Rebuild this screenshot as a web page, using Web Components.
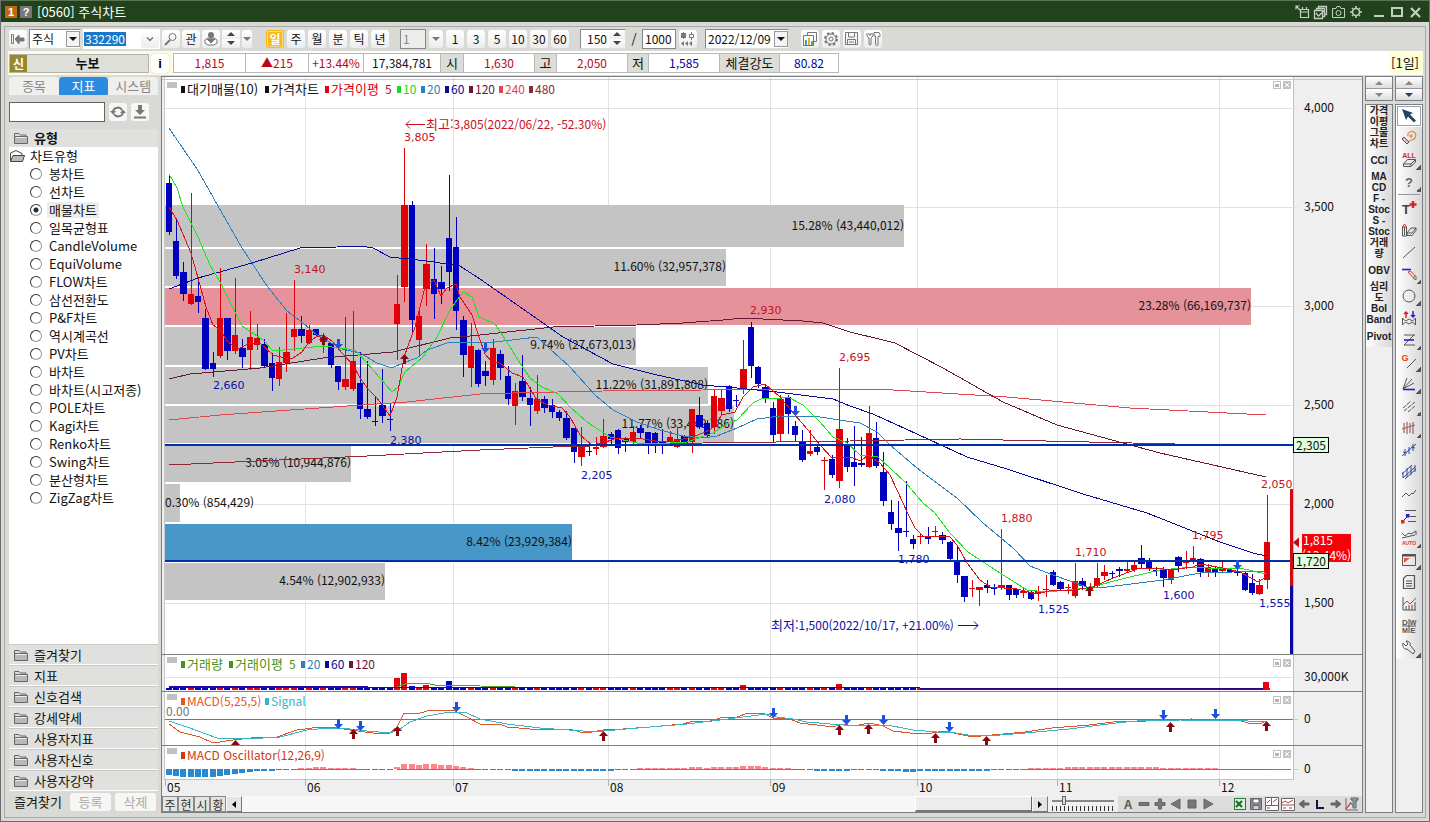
<!DOCTYPE html>
<html lang="ko">
<head>
<meta charset="utf-8">
<title>[0560] 주식차트</title>
<style>
    html, body { margin: 0; }
    body {
        font: 13px/16px "Noto Sans CJK KR", sans-serif;
        color: #111;
        background: #d9dad5;
    }
</style>
</head>
<body>
<app-window>
    <title-bar slot="title" code="0560">주식차트</title-bar>
    <chart-toolbar slot="bars"></chart-toolbar>
    <quote-bar slot="bars"></quote-bar>
    <side-panel></side-panel>
    <chart-view></chart-view>
    <tool-strip kind="text"></tool-strip>
    <tool-strip kind="icon"></tool-strip>
</app-window>

<script>
// lettering inside a glyph
const letters = (x, y, t, size, fill) =>
    `<text x="${x}" y="${y}" text-anchor="middle" font-family="Liberation Sans, sans-serif" font-weight="bold" font-size="${size}" fill="${fill}" stroke="none">${t}</text>`;

// 16x16 glyphs, drawn with currentColor unless a tool has its own colour
const GLYPHS = {
    popout: '<path d="M6.5 5.5h8v8h-8zM6 8h9M8.5 3v2M12.5 3v2M2 2l4 4M2 5.5V2h3.5" stroke-width="1.2"/>',
    sheets: '<path d="M2.5 6.5h8v8h-8zM4.5 6V4.5h8v8H11M6.5 4V2.5h8v8H13M4 9l2.5 3L13 6" stroke-width="1.3"/>',
    camera: '<path d="M2.5 4.5H6l1-2h3l1 2h3.5v9h-12z"/><circle cx="8.5" cy="9" r="2.5"/>',
    sun: '<circle cx="8" cy="8" r="3.5" stroke-width="1.6"/><path d="M8 2v2M8 12v2M2 8h2M12 8h2M4 4l1 1M11 11l1 1M12 4l-1 1M5 11l-1 1" stroke-width="1.6"/>',
    min: '<path d="M3 12h10" stroke-width="2"/>',
    max: '<path d="M3 4h10v8H3z" stroke-width="2"/>',
    close: '<path d="M4 4l9 9M13 4l-9 9" stroke-width="2.2"/>',
    first: '<path d="M1.5 3.5h2v9h-2z"/><path d="M5 8l4-4v3h5v3H9v3z" fill="currentColor"/>',
    search: '<circle cx="9.5" cy="6" r="3.5"/><path d="M7 9l-5 5" stroke-width="2"/>',
    chev: '<path d="M5 6.5l3 3 3-3" stroke-width="1.5"/>',
    down: '<path d="M4 6h8l-4 4z" fill="currentColor" stroke="none"/>',
    up: '<path d="M4 10h8L8 6z" fill="currentColor" stroke="none"/>',
    scrollLeft: '<path d="M10 5v7L6 8.5z" fill="#000" stroke="none"/>',
    scrollRight: '<path d="M6 5v7l4-3.5z" fill="#000" stroke="none"/>',
    stamp: '<circle cx="8" cy="4" r="3" fill="currentColor" stroke="none"/><path d="M2 9l3-2h6l3 2v3l-3 2H5l-3-2z" fill="#fff"/><path d="M4 8h8l-4 4z" fill="currentColor"/>',
    squeeze: '<g fill="currentColor" stroke="none"><rect x="1" y="2" width="5" height="5"/><path d="M3 1h1v7H3zM4 10v5l-3-2.5zM8 10v5l-3-2.5zM12 10v5l-3-2.5z"/></g><path d="M9.5 3.5h4v3h-4zM11.5 1v2M11.5 7v2"/>',
    charts: '<path d="M5.5 1.5h9v9h-9z" fill="#fff"/><path d="M1.5 4.5h10v10h-10z" fill="#fff"/><path d="M3 9h2v5H3z" fill="#3a9bd0" stroke="none"/><path d="M6 7h2v7H6z" fill="#e8b020" stroke="none"/><path d="M9 10h2v4H9z" fill="#5fae5f" stroke="none"/>',
    gear: '<circle cx="8" cy="8" r="6" stroke-dasharray="2.5 2.2" stroke-width="2"/><circle cx="8" cy="8" r="5" fill="#f4f4f4"/><circle cx="8" cy="8" r="2"/>',
    save: '<path d="M1.5 1.5h12v12h-12zM4.5 2v4h6V2M3.5 13.5v-5h8v5M5 11h5"/>',
    tools: '<path d="M2 2v3l2 2v6c0 1.5 2 1.5 2 0V7l2-2V2M4 2v2h2V2M9 1.5h5l1 2v2h-2v8c0 1.5-2.5 1.5-2.5 0V5H9z"/>',
    refresh: '<path d="M3 7a5 5 0 0 1 9-1M13 9a5 5 0 0 1-9 1" stroke-width="2"/><path d="M0 7h6l-3 3.5zM10 9h6l-3-3.5z" fill="currentColor" stroke="none"/>',
    import: '<path d="M6 1h4v5h3l-5 5-5-5h3z" fill="currentColor" stroke="none"/><path d="M2 13.5h12" stroke-width="2"/>',
    cursor: '<path d="M1 1l11 4-3 1.5 6 6-2 2-6-6-2 3.5z" fill="#1f4568" stroke="none"/>',
    undo: '<path d="M7 6c-1-3 3-6 6-4s2 7-2 8l-3 1M10 4v4M8 6h4" stroke="#e08848" stroke-width="1.2"/><path d="M1 9l2-2 5 5-2 2z" fill="#ccc"/><path d="M1 9l2-2" stroke="#d22"/>',
    eraseAll: '<path d="M2.5 12l4-4.5h8L10 12zM2.5 12v2.5H10V12M10 14.5l4.5-4.5V7.5"/>' + letters(8, 6, 'ALL', 7, '#d22'),
    help: letters(8, 13, '?', 13, '#666'),
    text: letters(5, 14, 'T', 13, '#444') + '<path d="M12 1v7M8.5 4.5h7" stroke="#e02020" stroke-width="2.4"/>',
    eraser: '<path d="M1.5 5h4v9h-4zM3.500 5v8"/><path d="M1.5 5l2-3 2 3" stroke="#c33"/><path d="M6 11l4-5h5l-4 5zM6 11v2.5h5l4-5V6"/>',
    line: '<path d="M2 14L14 3"/>',
    pencil: '<path d="M1 3.5h9" stroke="#22c" stroke-width="1.6"/><path d="M7 6l5 5.5 2.5-1.5-5-5z" fill="#f4d8d0" stroke="#b44"/><path d="M12 12l3 2v-4" stroke="#383"/>',
    circle: '<circle cx="8" cy="8" r="6"/>',
    swing: '<path d="M1.5 15V8l3 3 3.500-2 3.500 2 3-3v7M1.500 15l3-3 3.500 2 3.500-2 3 3"/><path d="M5 8V2M3 4l2-2 2 2" stroke="#d22" stroke-width="1.5"/><path d="M12 1v6M10 5l2 2 2-2" stroke="#22c" stroke-width="1.5"/>',
    zline: '<path d="M3 3h11M3 13h11M3 13L13 3"/><path d="M3 8h10" stroke="#22c" stroke-width="1.6"/>',
    gline: '<path d="M6 14L15 5"/>' + letters(4, 7, 'G', 9, '#d42'),
    fan: '<path d="M2 13L13 7M2 13L11 3M2 13L6 2"/><path d="M2 13.5h12" stroke="#22c" stroke-width="1.6"/>',
    rays: '<path d="M2 10l8-7M3 13L14 4M7 14l7-6" stroke-dasharray="4 1"/>',
    bars: '<path d="M3 3v10M6 2v12M9 3v10M12 2v12" stroke="#845"/><path d="M1 9l13-4" stroke="#b53"/>',
    zig: '<path d="M1 14L15 2M4 14V7M8 12V5M12 9V2M2 10l4 1M10 5l4 1" stroke="#334a9c"/>',
    zig2: '<path d="M1 10L11 1M4 15L15 5M2 14V8M6 13V4M10 11V2M14 8V1M2 14l12-11" stroke="#334a9c"/>',
    wave: '<path d="M1 11l4-4 3 3 3-3 1 1 3-4"/>',
    levels: '<path d="M4 2.5h11M9 8.5h6M7 13.5h8"/><path d="M2 13l5-5" stroke="#22c"/><path d="M0 12h3.5v3.5H0z" fill="#e22" stroke="none"/><path d="M5 6h3.5v3.5H5z" fill="#22c" stroke="none"/>',
    auto: '<path d="M1 3l3 3 4-3 2 1 5-3v4M1 8l13-3"/>' + letters(8, 15, 'AUTO', 5, '#d33'),
    window: '<path d="M1.5 2.5h13v11h-13z"/><path d="M1 3.5h14" stroke-width="2"/><path d="M3 11V6h6z" fill="#e54" stroke="none"/>',
    doc: '<path d="M5.5 1.5h8v13h-11v-10zM5 7h6M5 9.5h6M5 12h6" stroke-width="1.2"/>',
    graph: '<path d="M2 1v13h13M5 14v-4M8 14v-5M11 14V9M14 14V6"/><path d="M2 9l4-4 3 3 6-6" stroke="#d33"/>',
    panels: '<path d="M8 1v14M1 8h14"/>' + letters(4, 7, 'D', 8, '#555') + letters(12, 7, 'W', 7, '#555') + letters(4, 15, 'M', 7, '#555') + letters(12, 15, 'E', 8, '#555'),
    wrench: '<path d="M2 3l3 3 2-2-2-3c3 0 5 2 4 4l5 6-2 3-6-5C3 10 1 6 2 3z"/>',
    letterA: letters(8, 13, 'A', 12, '#555'),
    minus: '<path d="M3 6.5h10v3H3z" fill="#777"/>',
    plus: '<path d="M6.5 3v3.5H3v3h3.5V13h3V9.5H13v-3H9.5V3z" fill="#777"/>',
    play: '<path d="M4 3v10l9-5z" fill="#777"/>',
    back: '<path d="M12 3v10L3 8z" fill="#777"/>',
    stop: '<path d="M4 4h8v8H4z" fill="#777"/>',
    excel: '<path d="M2.5 2.5h11v11h-11z" stroke="#287a3a" fill="#d8efd8"/><path d="M4 5l6 6M10 5l-6 6" stroke="#176b2a" stroke-width="2"/>',
    disk: '<path d="M2.5 2.5h11v11h-11z" fill="#889"/><path d="M5 3h6v4H5z" fill="#fff"/><path d="M5 9.5h6v4H5z" fill="#ccd"/>',
    pane: '<path d="M1.5 1.5h13v13h-13z" fill="#fff"/><path d="M7.5 2v7M2 9.5h12"/><path d="M3 7l3-3M9 6l4-3M3 12h3" stroke="#c33"/>',
    pane2: '<path d="M1.5 2.5h13v12h-13z" fill="#fff"/><path d="M2 9h12"/><path d="M2 7l3-2 3 2 5-3M3 12h3M9 12h3" stroke="#c33"/>',
    left: '<path d="M3 8l5-4v3h5v2H8v3z" fill="#666" stroke="#666"/>',
    right: '<path d="M13 8L8 4v3H3v2h5v3z" fill="#666" stroke="#666"/>',
    corner: '<path d="M5 4v8h7" stroke="#114" stroke-width="2"/>',
    chartT: '<path d="M2 2v12h12M3 12l4-5 2 3 5-7"/><path d="M7 2h7v2h-2v8h-3V4H7z" fill="#7aa"/><path d="M2 13l5-7" stroke="#c33"/>',
    folder: '<path d="M1.5 13V3.5H6L7.5 5H13v2" fill="#ddd"/><path d="M1.5 13.5v-7h13v7z" fill="#b8b8b8"/><path d="M2.5 7.5h11" stroke="#eee"/>',
    folderOpen: '<path d="M1.5 13V5L7 2.5l6 3V8" fill="#fff"/><path d="M1.5 13.5l2.5-6h11.5l-2 6z" fill="#bbb"/>',
};

class HtsIcon extends HTMLElement {
    connectedCallback() {
        const root = this.attachShadow({mode: 'open'});
        root.innerHTML = `
        <style>
            :host { display: inline-block; width: 16px; height: 16px; flex: none; }
            svg { display: block; }
        </style>
        <svg width="16" height="16" viewBox="0 0 16 16" fill="none" stroke="currentColor">${GLYPHS[this.getAttribute('name')] || ''}</svg>`;
    }
}

const icon = name => `<hts-icon name="${name}"></hts-icon>`;

class AppWindow extends HTMLElement {
    constructor() {
        super();
        this.attachShadow({mode: 'open'}).innerHTML = `
        <style>
            :host { display: flex; flex-direction: column; min-height: 100vh; box-sizing: border-box; border: 1px solid #6d6d6d; border-top: 0; }
            .frame { flex: 1; display: flex; flex-direction: column; margin: 4px 3px 3px; border: 1px solid #a9a9a4; }
            main {
                flex: 1;
                display: grid;
                grid-template-columns: 150px minmax(0, 1fr) 28px 28px;
                column-gap: 2px;
                padding: 1px 2px 4px 4px;
            }
        </style>
        <slot name="title"></slot>
        <div class="frame">
            <slot name="bars"></slot>
            <main><slot></slot></main>
        </div>`;
    }
}

class TitleBar extends HTMLElement {
    constructor() {
        super();
        this.attachShadow({mode: 'open'}).innerHTML = `
        <style>
            :host { display: flex; align-items: center; height: 21px; padding: 0 5px 0 4px; border-top: 1px solid #5c7455; background: #22421c; color: #fff; }
            .tag { width: 12px; height: 12px; margin-right: 3px; font: bold 11px/12px "Liberation Sans", sans-serif; text-align: center; background: #c06a10; }
            .tag.q { background: #777; margin-right: 5px; }
            h1 { margin: 0; font-size: 13px; font-weight: normal; flex: 1; }
            button { width: 18px; height: 18px; padding: 1px; border: 0; background: none; color: #c4cfbf; }
            button.first { margin-left: 5px; }
        </style>
        <span class="tag">1</span><span class="tag q">?</span>
        <h1>[${this.getAttribute('code')}] <slot></slot></h1>
        ${['popout', 'sheets', 'camera', 'sun'].map(n => `<button aria-label="${n}">${icon(n)}</button>`).join('')}
        <button class="first" aria-label="min">${icon('min')}</button><button aria-label="max">${icon('max')}</button><button aria-label="close">${icon('close')}</button>`;
    }
}

class ChartToolbar extends HTMLElement {
    constructor() {
        super();
        const keys = list => list.map(t => `<button${t == '일' ? ' class="on"' : ''}>${t}</button>`).join('');
        this.attachShadow({mode: 'open'}).innerHTML = `
        <style>
            :host { display: flex; align-items: center; gap: 2px; height: 24px; padding-left: 4px; }
            button { width: 18px; height: 18px; padding: 0; border: 0; border-radius: 3px; background: linear-gradient(#fff, #ececec); font: inherit; font-size: 12px; line-height: 18px; color: #111; text-align: center; flex: none; }
            button hts-icon { margin: 1px; color: #777; display: block; }
            button.on { background: #f8b818; color: #fff; outline: 1px solid #fbdc90; outline-offset: -2px; font-weight: bold; }
            .group { display: flex; align-items: center; gap: 3px; margin-left: 9px; }
            .keys { margin-left: 12px; }
            .field { display: flex; align-items: center; box-sizing: border-box; height: 20px; background: #fff; border: 1px solid #888; border-right-color: #ddd; border-bottom-color: #ddd; }
            .field.plain { border-color: #fff; }
            .field.off { background: #ececea; border-color: #888; }
            input, select { box-sizing: border-box; min-width: 0; height: 18px; border: 0; padding: 0 2px; background: none; font: inherit; font-size: 12px; line-height: 18px; appearance: none; color: #111; border-radius: 0; }
            .arrow { width: 12px; height: 14px; border: 1px solid #999; overflow: hidden; display: flex; justify-content: center; background: #f4f4f4; }
            .arrow hts-icon { margin: -1px -2px; }
            .code input { width: 57px; padding: 0 1px; color: #fff; background: linear-gradient(#1b78c8, #1b78c8) 0 center / 42px 14px no-repeat; }
            .stack { display: flex; flex-direction: column; width: 18px; }
            .stack button { width: 18px; height: 9px; overflow: hidden; border-radius: 1px; }
            .stack hts-icon { margin: -4px 1px 0; color: #444; }
            .spin .stack, .spin .stack button { width: 16px; }
            .spin hts-icon { margin: -4px 0 0; }
            .tools { display: flex; gap: 3px; margin-left: 10px; }
        </style>
        <button aria-label="처음">${icon('first')}</button>
        <span class="field"><select aria-label="종류" style="width:36px"><option>주식</option></select><span class="arrow">${icon('down')}</span></span>
        <span class="field plain code"><input aria-label="종목코드" value="332290"><button aria-label="목록">${icon('chev')}</button></span>
        <button aria-label="찾기">${icon('search')}</button>
        <button>관</button>
        <button aria-label="등록">${icon('stamp')}</button>
        <span class="stack"><button aria-label="위">${icon('up')}</button><button aria-label="아래">${icon('down')}</button></span>
        <button aria-label="더보기" style="width:10px"><hts-icon name="down" style="margin:1px -3px"></hts-icon></button>
        <span class="group keys">${keys(['일', '주', '월', '분', '틱', '년'])}</span>
        <span class="group">
            <span class="field off"><input aria-label="주기" value="1" style="width:24px;color:#888"></span>
            <button aria-label="주기 목록" style="width:14px"><hts-icon name="down" style="margin:1px -1px"></hts-icon></button>
            ${keys(['1', '3', '5', '10', '30', '60'])}
        </span>
        <span class="group">
            <span class="field spin"><input aria-label="개수" value="150" style="width:28px;text-align:right"><span class="stack"><button aria-label="증가">${icon('up')}</button><button aria-label="감소">${icon('down')}</button></span></span>
            <span style="width:10px;text-align:center">/</span>
            <span class="field off" style="background:#fff"><input aria-label="전체" value="1000" style="width:32px"></span>
            <button aria-label="압축">${icon('squeeze')}</button>
        </span>
        <span class="field" style="margin-left:6px"><input aria-label="날짜" value="2022/12/09" style="width:68px"><span class="arrow">${icon('down')}</span></span>
        <span class="tools">${['charts', 'gear', 'save', 'tools'].map(n => `<button aria-label="${n}">${icon(n)}</button>`).join('')}</span>`;
    }
}

class QuoteBar extends HTMLElement {
    constructor() {
        super();
        const cells = [
            ['1,815', 71, 'up'], ['▲215', 62, 'up'], ['+13.44%', 54, 'up'], ['17,384,781', 76, ''],
            ['시', 22, 'k'], ['1,630', 70, 'up'], ['고', 21, 'k'], ['2,050', 70, 'up'],
            ['저', 20, 'k'], ['1,585', 70, 'down'], ['체결강도', 59, 'k'], ['80.82', 58, 'down'],
        ];
        this.attachShadow({mode: 'open'}).innerHTML = `
        <style>
            :host { display: flex; align-items: center; height: 24px; background: #fff; margin: 0 2px 0 3px; font-size: 12px; }
            .name { display: flex; align-items: center; gap: 2px; width: 165px; height: 24px; background: #fdfbe4; flex: none; }
            .stock { display: flex; align-items: center; box-sizing: border-box; width: 140px; height: 19px; margin-left: 1px; border: 1px solid #b4b4ac; background: #dededa; }
            .stock i { width: 17px; height: 17px; background: #96892d; color: #fff; font-style: normal; font-weight: bold; line-height: 17px; text-align: center; }
            .stock b { flex: 1; text-align: center; font-size: 13px; }
            button { width: 18px; height: 19px; padding: 0; border: 0; border-radius: 3px; background: #fff; font: bold 13px "Liberation Sans", sans-serif; box-shadow: 0 0 1px #888; }
            .cells { display: flex; border: 1px solid #b8b8b4; border-right: 0; }
            .cells span { height: 18px; line-height: 18px; border-right: 1px solid #b8b8b4; text-align: center; }
            .up { color: #c00418; }
            .down { color: #00009c; }
            .k { background: #dcdcd8; font-size: 13px; }
            .period { margin-left: auto; padding: 0 4px 0 2px; line-height: 22px; font-size: 13px; background: #ffffd8; }
        </style>
        <div class="name"><div class="stock"><i>신</i><b>누보</b></div><button>i</button></div>
        <div class="cells">${cells.map(([t, w, c]) => `<span class="${c}" style="width:${w}px">${t}</span>`).join('')}</div>
        <span class="period">[1일]</span>`;
    }
}

class SidePanel extends HTMLElement {
    constructor() {
        super();
        const types = ['봉차트', '선차트', '매물차트', '일목균형표', 'CandleVolume', 'EquiVolume', 'FLOW차트', '삼선전환도', 'P&amp;F차트',
            '역시계곡선', 'PV차트', '바차트', '바차트(시고저종)', 'POLE차트', 'Kagi차트', 'Renko차트', 'Swing차트', '분산형차트', 'ZigZag차트'];
        const groups = ['즐겨찾기', '지표', '신호검색', '강세약세', '사용자지표', '사용자신호', '사용자강약'];
        this.attachShadow({mode: 'open'}).innerHTML = `
        <style>
            :host { display: flex; flex-direction: column; width: 149px; }
            button { font: inherit; padding: 0; border: 0; }
            nav { display: flex; height: 18px; margin-top: 1px; }
            nav button { flex: 1; line-height: 18px; color: #888; background: #efefee; border-radius: 4px 4px 0 0; }
            nav .on { background: #2c8be0; color: #fff; }
            .find { display: flex; align-items: center; gap: 4px; height: 34px; }
            .find input { box-sizing: border-box; width: 96px; height: 20px; border: 1px solid #666; background: #fff; }
            .find button { width: 18px; height: 18px; border-radius: 3px; background: #f6f6f6; color: #777; }
            .find hts-icon { display: block; margin: 1px; }
            h2 { display: flex; align-items: center; gap: 5px; height: 18px; margin: 0; padding-left: 4px; background: #e0e0df; font-size: 13px; color: #111; }
            h2 hts-icon, .groups hts-icon { color: #666; }
            .list { flex: 1; background: #fff; }
            .root { display: flex; align-items: center; gap: 5px; height: 18px; }
            .root hts-icon { color: #444; }
            label { display: flex; align-items: center; height: 18px; padding-left: 21px; }
            input[type=radio] { appearance: none; box-sizing: border-box; width: 12px; height: 12px; margin: 0 5px 0 0; border: 1px solid #333; border-right-color: #999; border-bottom-color: #999; border-radius: 50%; background: #fff; }
            input:checked { background: radial-gradient(#1c3040 2px, #fff 3px); }
            label span { padding: 0 2px; }
            input:checked + span { background: #ededed; }
            .groups button { display: flex; align-items: center; gap: 5px; width: 100%; height: 21px; padding-left: 4px; background: #e0e0df; border-bottom: 1px solid #fff; border-top: 1px solid #c8c8c4; color: #111; box-sizing: border-box; }
            footer { display: flex; align-items: center; gap: 4px; height: 22px; padding-left: 5px; }
            footer span { width: 52px; }
            footer button { width: 41px; height: 18px; border-radius: 3px; background: #f6f6f5; color: #aaa; }
        </style>
        <nav><button>종목</button><button class="on">지표</button><button>시스템</button></nav>
        <div class="find"><input aria-label="지표 찾기"><button aria-label="새로고침">${icon('refresh')}</button><button aria-label="내려받기">${icon('import')}</button></div>
        <h2>${icon('folder')}유형</h2>
        <div class="list">
            <div class="root">${icon('folderOpen')}차트유형</div>
            ${types.map(t => `<label><input type="radio" name="type"${t == '매물차트' ? ' checked' : ''}><span>${t}</span></label>`).join('')}
        </div>
        <div class="groups">${groups.map(g => `<button>${icon('folder')}${g}</button>`).join('')}</div>
        <footer><span>즐겨찾기</span><button disabled>등록</button><button disabled>삭제</button></footer>`;
    }
}

// one candle per entry: colour, high, body top, body bottom, low
const CANDLES = `
b175,183,232,234 b218,241,276,278 b262,272,294,300 r193,294,304,304 b279,296,302,312 b309,318,369,369 b352,363,369,376 r268,318,356,357
b318,318,351,359 r278,335,351,353 b339,348,357,367 r311,337,350,369 r324,338,345,349 b339,344,366,367 b353,363,378,390 r347,362,379,385
r313,352,363,371 r280,329,337,350 b316,329,336,342 r325,330,343,343 b329,329,335,336 r333,338,342,352 b343,343,365,367 b366,366,382,389
r317,379,387,389 r311,361,389,390 b352,383,409,418 b361,409,417,418 b396,421,422,425 b369,405,416,422 b404,419,420,430 r275,304,324,359
r148,205,287,301 b201,205,320,333 r308,316,340,355 r244,264,289,305 b248,279,294,318 b266,282,289,303 b175,238,272,290 b217,247,311,329
b316,320,355,376 r323,346,368,386 b349,350,384,386 b361,371,376,385 r339,348,380,384 b350,354,368,379 b366,376,399,404 r383,391,406,424
b355,381,397,400 b387,398,405,425 r375,399,411,413 b396,399,408,412 b399,405,412,417 b410,412,418,420 b411,418,438,439 b428,428,452,462
r427,446,457,465 b447,451,452,455 r437,447,449,454 r419,436,447,447 b432,434,439,443 b429,430,448,453 b437,438,442,451 r426,432,442,443
b425,428,433,437 b432,432,446,453 b432,433,446,452 b429,442,446,453 r431,437,442,445 r427,439,447,447 b435,436,444,445 r409,409,442,452
b397,415,427,428 b420,423,436,437 r389,396,427,433 r389,398,411,415 b385,386,409,411 b395,400,401,406 r340,369,390,393 b322,327,366,377
b366,367,384,387 b384,387,398,402 b402,408,435,442 r395,399,434,441 b395,397,414,433 b421,426,435,440 b430,441,460,461 r430,451,454,455
b445,447,452,454 r457,460,461,489 b455,459,475,477 r368,429,481,487 b438,445,467,471 b426,462,467,485 b437,463,465,466 r406,433,467,467
b422,438,466,467 b452,472,501,505 b500,512,524,529 b501,528,533,550 b481,531,532,536 b535,539,544,548 r533,536,537,543 b527,536,539,543
r526,531,532,535 b532,535,540,543 b541,542,559,560 b545,560,575,582 b576,576,597,601 r580,588,589,596 r587,587,590,605 b580,585,588,592
b584,587,589,594 r529,585,588,589 b585,585,595,599 b588,589,595,597 r587,591,593,597 b591,592,599,599 r586,591,593,600 r575,589,590,596
b570,572,585,585 b581,582,589,590 r584,587,588,593 r563,581,596,597 b578,581,586,589 r583,588,589,590 r563,578,586,587 r565,572,576,579
b571,573,574,578 b567,569,571,576 r562,569,571,572 r560,565,570,571 b545,558,564,568 b558,560,568,570 b567,570,571,575 b567,570,578,586
r568,569,580,583 b556,557,566,571 r551,561,563,568 r546,558,560,563 b558,559,572,576 r564,567,573,576 b567,568,573,576 r562,569,571,572
b568,570,572,572 b568,571,573,575 b572,573,590,590 b574,583,593,594 r579,585,594,594 r495,542,580,588`.trim().split(/\s+/);

const AVERAGES = [
    ['#902838', '169,465 367,456 480,450 553,447 703,443 850,441 960,439 1175,444'],
    ['#e04850', '169,420 220,415 347,406 407,402 480,394 513,393 603,391 703,390 850,389 877,389 1007,397 1130,408 1266,415'],
    ['#6a1838', '169,379 190,374 260,368 323,358 393,352 450,338 480,335 553,327 637,325 683,323 723,320 743,318 803,321 823,323 850,332 883,340 895,343 943,368 1003,402 1057,425 1123,443 1160,453 1266,477'],
    ['#0a0a98', '169,289 198,278 252,263 300,248 337,247 360,246 373,248 390,257 427,261 460,266 480,279 513,302 563,337 613,364 657,375 703,385 737,388 777,392 833,399 850,406 873,414 917,434 967,457 1007,469 1083,494 1147,513 1220,542 1253,553 1266,556'],
    ['#2a80c0', '169,128 197,169 242,248 267,286 287,311 303,323 317,335 342,349 360,353 377,363 392,368 403,363 417,358 427,350 450,342 479,343 495,342 537,337 550,349 570,367 595,395 613,410 637,422 660,430 683,436 703,438 717,436 737,428 757,419 780,416 820,417 846,421 860,423 877,432 890,445 917,468 957,498 983,523 1013,548 1030,566 1053,575 1087,587 1107,587 1163,580 1200,573 1266,571'],
    ['#20e020', '169,174 177,188 183,207 198,237 210,265 220,282 235,312 242,326 263,340 273,351 293,349 323,346 340,348 355,350 367,363 380,378 392,392 398,387 405,372 423,357 437,337 450,310 463,292 472,297 479,317 482,318 495,324 507,342 518,360 530,378 542,387 558,394 570,407 587,422 610,437 637,443 670,443 687,442 713,433 725,425 737,420 753,403 763,398 775,399 788,397 803,405 820,422 833,437 847,443 860,455 878,457 905,482 923,503 935,513 950,533 968,552 1000,573 1027,590 1047,592 1087,588 1130,577 1160,570 1193,567 1223,569 1240,568 1266,574'],
    ['#e01018', '169,207 177,220 191,253 198,278 206,307 213,325 220,330 228,342 238,349 250,343 260,343 273,355 285,358 293,358 302,352 309,342 316,337 323,335 332,341 342,353 353,365 360,378 368,389 377,398 390,416 397,397 404,357 415,327 425,287 434,280 441,296 447,288 456,284 460,297 472,315 479,337 485,354 492,362 500,363 512,373 523,377 537,400 548,405 562,408 570,417 580,435 592,445 603,443 617,438 637,438 655,441 673,442 683,439 693,437 710,430 722,415 735,412 743,397 753,387 765,384 780,397 795,415 808,430 820,445 832,458 850,457 861,461 868,455 880,463 890,475 898,492 907,512 915,528 923,536 950,537 957,545 967,563 980,580 990,587 1017,589 1037,594 1053,590 1073,590 1093,587 1113,578 1137,569 1157,568 1170,570 1193,567 1200,564 1223,568 1240,572 1258,582 1266,577'],
];

// volume profile: top, height, right end, colour, label
const PROFILE = [
    [205, 42, 904, '#c4c4c4', '15.28% (43,440,012)'],
    [249, 37, 726, '#c4c4c4', '11.60% (32,957,378)'],
    [288, 37, 1251, '#e5929b', '23.28% (66,169,737)'],
    [327, 38, 636, '#c4c4c4', '9.74% (27,673,013)'],
    [367, 37, 708, '#c4c4c4', '11.22% (31,891,808)'],
    [406, 37, 734, '#c4c4c4', '11.77% (33,449,786)'],
    [445, 37, 351, '#c4c4c4', '3.05% (10,944,876)'],
    [484, 38, 180, '#c4c4c4', '0.30% (854,429)'],
    [524, 37, 572, '#4798c8', '8.42% (23,929,384)'],
    [563, 37, 385, '#c4c4c4', '4.54% (12,902,933)'],
];

const MACD = '169,724 180,732 200,737 213,743 233,740 260,737 277,737 297,730 320,727 333,727 350,730 373,733 390,733 397,727 404,713 417,714 427,711 453,710 467,717 480,724 483,725 500,724 507,727 530,729 570,729 580,732 592,732 603,730 623,729 650,727 683,724 690,722 710,721 720,718 737,717 748,713 763,713 773,718 790,719 800,723 833,727 843,724 853,726 870,723 883,726 893,731 910,733 932,733 944,731 968,736 981,736 1025,732 1052,728 1089,725 1113,722 1181,720 1191,719 1238,720 1248,723 1262,723 1266,721';
const SIGNAL = '169,721 187,727 217,738 247,739 280,737 307,730 330,728 350,729 367,731 390,733 400,729 410,722 427,716 450,712 467,713 480,719 507,724 540,728 583,731 603,731 650,727 687,724 720,720 743,717 767,714 777,717 793,719 807,722 830,724 857,726 887,725 913,730 937,732 950,732 968,735 988,736 1025,733 1069,729 1116,723 1137,721 1181,720 1238,720 1258,722 1266,721';

// oscillator bars as [value, how many in a row]
const OSC = [[-6, 1], [-7, 1], [-8, 5], [-7, 1], [-6, 1], [-5, 1], [-4, 1], [-3, 1], [-2, 3], [-1, 2], [0, 1], [1, 2], [2, 2], [1, 4], [0, 1], [-1, 4],
    [2, 1], [5, 2], [4, 1], [5, 2], [4, 2], [3, 1], [2, 1], [1, 1], [-1, 5], [-2, 14], [-1, 2], [0, 1], [1, 7], [2, 2], [1, 1], [2, 4], [3, 3], [2, 1], [1, 3],
    [0, 1], [-1, 2], [-2, 5], [-1, 4], [-2, 3], [-3, 2], [-2, 10], [-1, 4], [0, 1], [1, 5], [2, 13], [1, 8], [0, 7]].flatMap(([v, n]) => Array(n).fill(v));

const MONTHS = [['05', 165], ['06', 305], ['07', 453], ['08', 608], ['09', 770], ['10', 917], ['11', 1057], ['12', 1219]];
const candleX = i => Math.floor(169 + 7.37 * i);
const rect = (x, y, w, h, fill) => `<rect x="${x}" y="${y}" width="${w}" height="${h}" fill="${fill}"/>`;
const text = (x, y, t, fill = '#111', extra = '') => `<text x="${x}" y="${y}" fill="${fill}" ${extra}>${t}</text>`;
const curve = (points, stroke) => `<polyline points="${points}" fill="none" stroke="${stroke}"/>`;
const downArrow = (x, y) => `<path d="M${x - 1} ${y - 5}h3v5h3l-4.5 5-4.5-5h3z" fill="#1c50e0"/>`;
const upArrow = (x, y) => `<path d="M${x - 1} ${y + 5}h3v-5h3l-4.5-5-4.5 5h3z" fill="#880810"/>`;

// shared plot area, y axis column and corner buttons
class ChartPane extends HTMLElement {
    get top() { return 0; }
    get bottom() { return 0; }
    get plotBottom() { return this.bottom - 1; }

    constructor() {
        super();
        const {top, bottom, plotBottom} = this;
        const ctl = top + 5;
        this.attachShadow({mode: 'open'}).innerHTML = `
        <style>
            :host { display: block; }
            svg { display: block; width: 100%; height: auto; font: 12px "Noto Sans CJK KR", sans-serif; }
            .tag { font: 11px "DejaVu Sans", sans-serif; }
            .ko { font-size: 13px; }
        </style>
        <svg viewBox="162 ${top} 1200 ${bottom - top}">
            <g shape-rendering="crispEdges">
                ${rect(162, top, 1200, bottom - top, '#efefef')}
                ${rect(164, top, 1129, plotBottom - top, '#fff')}
                ${rect(164, top, 1, plotBottom - top, '#c8c8c8')}
                ${MONTHS.slice(1).map(([, x]) => rect(x, top, 1, plotBottom - top, '#e2e2e2')).join('')}
                ${rect(1293, top, 1, plotBottom - top, '#c0c0c0')}
            </g>
            ${this.drawing()}
            <g shape-rendering="crispEdges">
                ${rect(167, top < 100 ? 82 : top + 2, 10, 6, '#c0c0c0')}
                <rect x="1273.5" y="${ctl - .5}" width="7" height="7" fill="#fff" stroke="#c0c0c0"/>
                ${rect(1275, ctl + 2, 4, 3, '#b4b4b4')}
                ${rect(1283, ctl - 1, 8, 8, '#c4c4c4')}
                <path d="M1285 ${ctl + 1}l4 4m0-4l-4 4" stroke="#fff"/>
            </g>
        </svg>`;
    }

    divider() { return rect(162, this.bottom - 1, 1200, 1, '#808080'); }
    legend(y, items) {
        return items.map(([x, t, c]) => (/^\d$/.test(t) ? text(x, y, t, c)
            : rect(x, y - 8, 4, 7, c) + text(x + 6, y, t, c, /[가-힣]/.test(t) ? 'class="ko"' : ''))).join('');
    }
}

class PricePane extends ChartPane {
    get top() { return 77; }
    get bottom() { return 655; }

    drawing() {
        const tag = (x, y, t) => text(x, y, t, '#c81020', 'class="tag"');
        const low = (x, y, t) => text(x, y, t, '#1010a8', 'class="tag"');
        const candles = CANDLES.map((s, i) => {
            const [hi, a, b, lo] = s.slice(1).split(',').map(Number);
            const x = candleX(i), fill = s[0] == 'r' ? '#e00008' : '#0000c0';
            return rect(x, hi, 1, lo - hi + 1, fill) + rect(x - 3, a, candleX(i + 1) - x - 1, Math.max(b - a, 1), fill);
        });
        const levels = [['4,000', 108], ['3,500', 207], ['3,000', 306], ['2,500', 405], ['2,000', 504], ['1,500', 603]];
        return `
            <g shape-rendering="crispEdges">
                ${rect(162, 79, 1200, 1, '#c8c8c8')}
                ${levels.map(([, y]) => rect(165, y, 1133, 1, '#e2e2e2')).join('')}
                ${PROFILE.map(([y, h, x, c]) => rect(165, y, x - 165, h, c) + rect(165, y + h, x - 165, 2, '#fff')).join('')}
            </g>
            ${levels.map(([t, y]) => text(1304, y + 4, t)).join('')}
            ${PROFILE.map(([y, , x, , t]) => x < 200 ? text(165, y + 23, t) : text(x, y + (y < 210 ? 25 : 22), t, '#111', 'text-anchor="end"')).join('')}
            <g shape-rendering="crispEdges">
                ${candles.join('')}
                ${AVERAGES.map(([c, p]) => curve(p, c)).join('')}
                ${rect(165, 444, 1128, 2, '#0030a8')}${rect(165, 560, 1128, 2, '#0030a8')}
                ${rect(1290, 489, 3, 97, '#d80810')}${rect(1290, 586, 3, 68, '#0808a8')}
            </g>
            ${[[338, 344], [485, 348], [795, 411], [1237, 565]].map(p => downArrow(...p)).join('')}
            ${[[323, 340], [404, 359], [1089, 591]].map(p => upArrow(...p)).join('')}
            ${tag(404, 141, '3,805')}${tag(294, 273, '3,140')}${tag(750, 314, '2,930')}${tag(839, 361, '2,695')}
            ${tag(1001, 522, '1,880')}${tag(1075, 556, '1,710')}${tag(1192, 539, '1,795')}${tag(1261, 488, '2,050')}
            ${low(213, 389, '2,660')}${low(390, 444, '2,380')}${low(581, 479, '2,205')}${low(824, 503, '2,080')}
            ${low(898, 563, '1,780')}${low(1038, 613, '1,525')}${low(1163, 599, '1,600')}${low(1259, 607, '1,555')}
            ${text(426, 129, '<tspan class="ko">최고:</tspan>3,805(2022/06/22, -52.30%)', '#c81020')}
            ${text(771, 630, '<tspan class="ko">최저:</tspan>1,500(2022/10/17, +21.00%)', '#1010a8')}
            <path d="M425 124.5h-19m4-4l-4 4 4 4" fill="none" stroke="#c81020"/>
            <path d="M958 625.5h20m-4-4l4 4-4 4" fill="none" stroke="#1010a8"/>
            <path d="M1293 542.5l6-5v10z" fill="#c00810"/>
            ${rect(1302, 534, 49, 28, '#f80008')}
            ${text(1303, 545, '1,815', '#fff')}${text(1302, 560, '(13.44%)', '#fff')}
            ${[['2,305', 445], ['1,720', 561]].map(([t, y]) => `<rect x="1293.5" y="${y - 7.5}" width="35" height="15" fill="#e0ffe0" stroke="#000"/>` + text(1296, y + 5, t)).join('')}
            ${this.legend(94, [[181, '대기매물(10)', '#111'], [265, '가격차트', '#111'], [325, '가격이평', '#e00010'], [385, '5', '#c01020'], [397, '10', '#20d820'],
                [421, '20', '#2a80c0'], [445, '60', '#0a0a98'], [469, '120', '#6a1838'], [499, '240', '#e04850'], [529, '480', '#902838']])}
            ${this.divider()}`;
    }
}

class VolumePane extends ChartPane {
    get top() { return 655; }
    get bottom() { return 692; }

    drawing() {
        const tall = {31: 12, 32: 17, 33: 4, 34: 3, 35: 5, 36: 3, 37: 3, 38: 9, 78: 5, 91: 6};
        // the two long averages run just above the bars
        return `
            <g shape-rendering="crispEdges">
                ${rect(165, 677, 1133, 1, '#e2e2e2')}
                ${CANDLES.map((s, i) => {
                    const h = tall[i] || 2;
                    return rect(candleX(i) - 3, 690 - h, 6, h, s[0] == 'r' ? '#e80010' : '#0000c0');
                }).join('')}
                ${curve('397,687 405,684 425,683 440,686 460,685 480,686 550,688', '#5c9c28')}
                ${curve('169,686 335,686 400,688', '#2010a0')}
                ${curve('169,687 870,687 920,688 1266,688', '#300880')}
                ${rect(920, 688, 346, 2, '#300880')}
                ${rect(1263, 682, 6, 8, '#e80010')}
            </g>
            ${text(1304, 681, '30,000K')}
            ${this.legend(669, [[181, '거래량', '#4c9018'], [229, '거래이평', '#4c9018'], [289, '5', '#4c9018'], [301, '20', '#2a80c0'], [325, '60', '#0a0a98'], [349, '120', '#6a1838']])}
            ${this.divider()}`;
    }
}

class MacdPane extends ChartPane {
    get top() { return 692; }
    get bottom() { return 746; }

    drawing() {
        return `
            <g shape-rendering="crispEdges">
                ${rect(165, 719, 1128, 1, '#777')}${rect(1293, 719, 5, 1, '#c8c8c8')}
                ${curve(MACD, '#e05828')}${curve(SIGNAL, '#38b4c4')}
            </g>
            ${[[338, 724], [360, 726], [456, 707], [773, 713], [846, 720], [883, 720], [949, 727], [1163, 715], [1215, 714]].map(p => downArrow(...p)).join('')}
            ${[[235, 745], [353, 734], [397, 731], [603, 736], [839, 730], [868, 729], [935, 738], [986, 741], [1170, 727], [1266, 726]].map(p => upArrow(...p)).join('')}
            ${text(166, 716, '0.00', '#777')}${text(1304, 723, '0')}
            ${this.legend(706, [[181, 'MACD(5,25,5)', '#e05828'], [265, 'Signal', '#38b4c4']])}
            ${this.divider()}`;
    }
}

class OscillatorPane extends ChartPane {
    get top() { return 746; }
    get bottom() { return 796; }
    get plotBottom() { return 779; }

    drawing() {
        return `
            <g shape-rendering="crispEdges">
                ${OSC.map((v, i) => rect(candleX(i) - 3, v > 0 ? 769 - v : 769, v ? 6 : 8, Math.abs(v) || 1, v > 0 ? '#ff8488' : '#2888d0')).join('')}
                ${rect(297, 769, 70, 1, '#e05050')}${rect(397, 769, 80, 1, '#e05050')}${rect(630, 769, 165, 1, '#e05050')}
                ${rect(1020, 769, 219, 1, '#e05050')}${rect(1268, 769, 23, 1, '#e05050')}${rect(1293, 769, 5, 1, '#c8c8c8')}
                ${rect(164, 779, 1130, 1, '#c0c0c0')}
                ${MONTHS.map(([, x]) => rect(x, 780, 1, 6, '#b0b0b0')).join('')}
            </g>
            ${MONTHS.map(([t, x]) => text(x + 2, 792, t)).join('')}${text(1304, 773, '0')}
            ${this.legend(760, [[181, 'MACD Oscillator(12,26,9)', '#d03810']])}`;
    }
}

class ChartScroller extends HTMLElement {
    constructor() {
        super();
        const cmds = ['letterA', 'minus', 'plus', 'back', 'stop', 'play', '', 'excel', 'disk', 'pane', 'pane2', 'left', 'corner', 'right', 'chartT'];
        this.attachShadow({mode: 'open'}).innerHTML = `
        <style>
            :host { display: flex; height: 16px; background: #dcdcda; }
            button { box-sizing: border-box; width: 16px; height: 16px; padding: 0; border: 1px solid #f8f8f8; border-right-color: #777; border-bottom-color: #777; background: #e4e4e2; font: inherit; font-size: 12px; line-height: 13px; color: #333; overflow: hidden; flex: none; }
            button hts-icon { margin: -1px; display: block; }
            .word { border-color: #888; }
            .track { flex: 1; display: flex; justify-content: flex-end; background: #f7f7f7; }
            .thumb { width: 117px; box-sizing: border-box; background: #ececec; border: 1px solid #fff; border-right-color: #666; border-bottom: 2px solid #777; }
            .zoom { display: flex; flex-direction: column; width: 62px; padding: 0 4px; background: #f0f0f0; margin-right: 2px; }
            input { appearance: none; width: 100%; height: 9px; margin: 0; background: linear-gradient(#888, #888) center / 100% 2px no-repeat; }
            input::-webkit-slider-thumb { appearance: none; width: 4px; height: 9px; background: #ddd; border: 1px solid #666; }
            .ticks { height: 5px; margin-top: 1px; background: repeating-linear-gradient(90deg, #333 0 1px, transparent 1px 4px); }
            .cmd { border: 0; background: none; color: #666; }
            .cmd hts-icon { margin: 0; }
            .gap { width: 16px; }
        </style>
        ${['주', '현', '시', '황'].map(t => `<button class="word">${t}</button>`).join('')}
        <button aria-label="왼쪽">${icon('scrollLeft')}</button>
        <div class="track"><div class="thumb"></div></div>
        <button aria-label="오른쪽">${icon('scrollRight')}</button>
        <div class="zoom"><input type="range" aria-label="확대" value="18"><div class="ticks"></div></div>
        ${cmds.map(n => n ? `<button class="cmd" aria-label="${n}">${icon(n)}</button>` : '<span class="gap"></span>').join('')}
        <span style="width:2px"></span>`;
    }
}

class ChartView extends HTMLElement {
    constructor() {
        super();
        this.attachShadow({mode: 'open'}).innerHTML = `
        <style>
            :host { display: flex; flex-direction: column; align-self: start; border: 1px solid #7c7c84; background: #efefef; }
        </style>
        <price-pane></price-pane>
        <volume-pane></volume-pane>
        <macd-pane></macd-pane>
        <oscillator-pane></oscillator-pane>
        <chart-scroller></chart-scroller>`;
    }
}

class ToolStrip extends HTMLElement {
    constructor() {
        super();
        const words = ['가격<br>이평', '그물<br>차트', 'CCI', 'MA<br>CD', 'F -<br>Stoc', 'S -<br>Stoc', '거래<br>량', 'OBV', '심리<br>도', 'Bol<br>Band', 'Pivot'];
        const icons = ['cursor', 'undo', 'eraseAll*', 'help*', '', 'text', 'eraser', 'line', 'pencil*', 'circle*', 'swing', 'zline*', 'gline*', 'fan*', 'rays*',
            'bars*', 'zig', 'zig2', 'wave', 'levels', 'auto*', 'window*', 'doc', 'graph', 'panels', 'wrench*'];
        const isText = this.getAttribute('kind') == 'text';
        this.attachShadow({mode: 'open'}).innerHTML = `
        <style>
            :host { display: flex; flex-direction: column; gap: 3px; }
            .nav, .tools { box-sizing: border-box; border: 1px solid #7c7c84; background: #efefef; }
            .nav { height: 25px; }
            .nav button { display: block; width: 100%; height: 11px; overflow: hidden; background: linear-gradient(#fff, #ddd); color: #888; }
            .nav button + button { border-top: 1px solid #999; height: 12px; }
            .nav hts-icon { display: block; margin: -3px auto; }
            .nav .dark { color: #1f4568; }
            .tools { flex: 1; }
            .set { background: linear-gradient(90deg, #fff, #d8d8d8); }
            button { padding: 0; border: 0; background: none; font: inherit; }
            .set button { display: flex; align-items: center; justify-content: center; width: 100%; height: 22px; font: bold 10px/11px "Liberation Sans", "Noto Sans CJK KR", sans-serif; color: #222; text-align: center; }
            .set .on { background: #fff; outline: 1px solid #9aa0a8; outline-offset: -2px; }
            .set .more { background: linear-gradient(135deg, transparent 50%, #555 50%) right 1px bottom 1px / 5px 5px no-repeat; }
            .set hts-icon { color: #555; }
            hr { height: 1px; margin: 1px 2px 2px; border: 0; background: #999; }
        </style>
        <div class="nav"><button aria-label="위로">${icon('up')}</button><button aria-label="아래로" class="${isText ? '' : 'dark'}">${icon('down')}</button></div>
        <div class="tools"><div class="set">
            ${isText ? words.map(w => `<button><span>${w}</span></button>`).join('')
                : icons.map((n, i) => n ? `<button aria-label="${n.replace('*', '')}" class="${i ? '' : 'on'}${n.endsWith('*') ? 'more' : ''}">${icon(n.replace('*', ''))}</button>` : '<hr>').join('')}
        </div></div>`;
    }
}

customElements.define('hts-icon', HtsIcon);
customElements.define('app-window', AppWindow);
customElements.define('title-bar', TitleBar);
customElements.define('chart-toolbar', ChartToolbar);
customElements.define('quote-bar', QuoteBar);
customElements.define('side-panel', SidePanel);
customElements.define('price-pane', PricePane);
customElements.define('volume-pane', VolumePane);
customElements.define('macd-pane', MacdPane);
customElements.define('oscillator-pane', OscillatorPane);
customElements.define('chart-scroller', ChartScroller);
customElements.define('chart-view', ChartView);
customElements.define('tool-strip', ToolStrip);
</script>
</body>
</html>
